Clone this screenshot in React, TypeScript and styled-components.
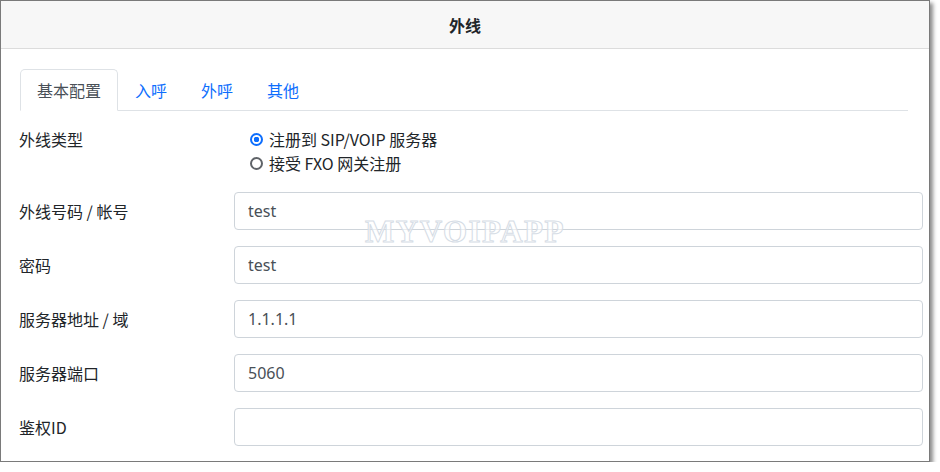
import styled, { createGlobalStyle } from 'styled-components';

const GlobalStyle = createGlobalStyle`
  html, body {
    margin: 0;
    padding: 0;
    background: #fff;
  }
  body {
    font-family: "Noto Sans CJK SC", "Noto Sans", sans-serif;
    color: #212529;
  }
`;

const tabs = ['基本配置', '入呼', '外呼', '其他'];

const fields = [
  { label: '外线号码 / 帐号', value: 'test' },
  { label: '密码', value: 'test' },
  { label: '服务器地址 / 域', value: '1.1.1.1' },
  { label: '服务器端口', value: '5060' },
  { label: '鉴权ID', value: '' },
];

export default function App() {
  return (
    <>
      <GlobalStyle />
      <Window>
        <Header>外线</Header>
        <Body>
          <Tabs>
            {tabs.map((t, i) => (
              <Tab key={t} $active={i === 0}>{t}</Tab>
            ))}
          </Tabs>
          <Form>
            <TypeRow>
              <Label>外线类型</Label>
              <Radios>
                <RadioItem>
                  <Radio $checked />
                  <span>注册到 SIP/VOIP 服务器</span>
                </RadioItem>
                <RadioItem>
                  <Radio />
                  <span>接受 FXO 网关注册</span>
                </RadioItem>
              </Radios>
            </TypeRow>
            {fields.map((f) => (
              <Row key={f.label}>
                <Label>{f.label}</Label>
                <Input readOnly value={f.value} />
              </Row>
            ))}
          </Form>
          <Watermark>MYVOIPAPP</Watermark>
        </Body>
      </Window>
    </>
  );
}

const Window = styled.div`
  width: 928px;
  height: 460px;
  border: 1px solid #7a7a7a;
  background: #fff;
  box-shadow: 3px 3px 4px rgba(0, 0, 0, 0.45);
  overflow: hidden;
`;

const Header = styled.div`
  height: 47px;
  border-bottom: 1px solid #dcdcdc;
  background: #f7f7f7;
  display: flex;
  align-items: center;
  justify-content: center;
  font-size: 16px;
  font-weight: 700;
  color: #212529;
`;

const Body = styled.div`
  position: relative;
  padding: 20px 6px 0 18px;
`;

const Tabs = styled.div`
  display: flex;
  margin-left: 1px;
  margin-right: 15px;
  border-bottom: 1px solid #dee2e6;
  height: 41px;
`;

const Tab = styled.div<{ $active?: boolean }>`
  display: flex;
  align-items: center;
  padding: 0 16px;
  font-size: 16px;
  margin-bottom: -1px;
  border: 1px solid ${(p) => (p.$active ? '#dee2e6' : 'transparent')};
  border-bottom-color: ${(p) => (p.$active ? '#fff' : 'transparent')};
  border-radius: 5px 5px 0 0;
  background: ${(p) => (p.$active ? '#fff' : 'transparent')};
  color: ${(p) => (p.$active ? '#495057' : '#0d6efd')};
`;

const Form = styled.div`
  display: flex;
  flex-direction: column;
  padding-top: 16px;
  gap: 16px;
`;

const TypeRow = styled.div`
  display: grid;
  grid-template-columns: 215px 1fr;
  align-items: start;
  margin-bottom: 1px;
`;

const Row = styled.div`
  display: grid;
  grid-template-columns: 215px 1fr;
  align-items: center;
`;

const Label = styled.div`
  font-size: 16px;
  line-height: 24px;
  color: #212529;
`;

const Radios = styled.div`
  display: flex;
  flex-direction: column;
  padding-left: 16px;
`;

const RadioItem = styled.label`
  display: flex;
  align-items: center;
  gap: 6px;
  font-size: 16px;
  line-height: 24px;
  color: #212529;
`;

const Radio = styled.span<{ $checked?: boolean }>`
  box-sizing: border-box;
  width: 13px;
  height: 13px;
  border-radius: 50%;
  border: 2px solid ${(p) => (p.$checked ? '#0d6efd' : '#5f6368')};
  background: ${(p) => (p.$checked ? 'radial-gradient(circle, #0d6efd 0 2.6px, #fff 3px)' : '#fff')};
`;

const Input = styled.input`
  box-sizing: border-box;
  height: 38px;
  width: 100%;
  padding: 0 13px;
  border: 1px solid #ced4da;
  border-radius: 4px;
  font-family: "Noto Sans", "Noto Sans CJK SC", sans-serif;
  font-size: 16px;
  color: #495057;
  background: #fff;
  outline: none;
`;

const Watermark = styled.div`
  position: absolute;
  left: 364px;
  top: 165px;
  font-family: "Liberation Serif", "DejaVu Serif", serif;
  font-weight: 700;
  font-size: 31px;
  letter-spacing: 1.5px;
  color: rgba(255, 255, 255, 0.6);
  -webkit-text-stroke: 1px #d5dce5;
  pointer-events: none;
`;
